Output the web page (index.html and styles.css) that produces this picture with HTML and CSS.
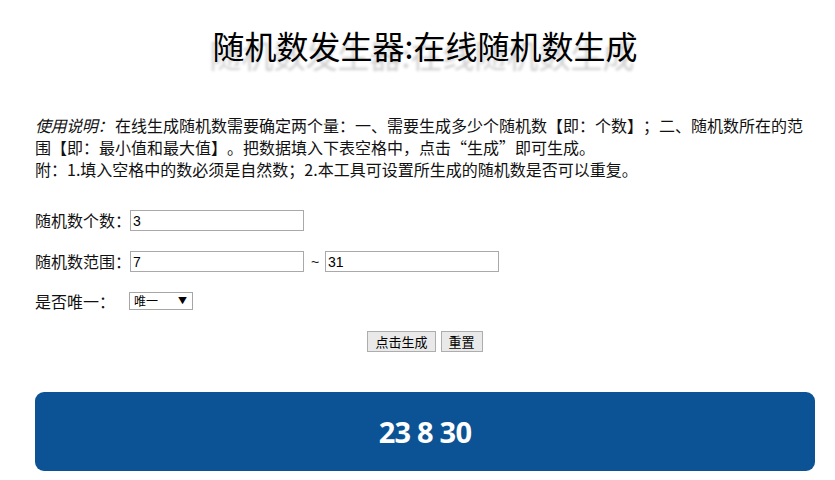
FILE: index.html
```html
<!DOCTYPE html>
<html lang="zh-CN">
<head>
<meta charset="utf-8">
<title>随机数发生器</title>
<link rel="stylesheet" href="styles.css">
</head>
<body>
<div class="page">
  <h1 class="title">随机数发生器:在线随机数生成</h1>
  <p class="intro"><em class="note">使用说明：</em>在线生成随机数需要确定两个量：一、需要生成多少个随机数【即：个数】；二、随机数所在的范围【即：最小值和最大值】。把数据填入下表空格中，点击“生成”即可生成。<br>附：1.填入空格中的数必须是自然数；2.本工具可设置所生成的随机数是否可以重复。</p>
  <div class="form">
    <div class="row row-input">
      <label class="label">随机数个数：</label><input class="field" type="text" value="3">
    </div>
    <div class="row row-input">
      <label class="label">随机数范围：</label><input class="field" type="text" value="7"><span class="tilde">~</span><input class="field" type="text" value="31">
    </div>
    <div class="row row-select">
      <label class="label label-short">是否唯一：</label>
      <span class="select-wrap"><select class="select"><option>唯一</option><option>不唯一</option></select><span class="arrow">▼</span></span>
    </div>
    <div class="buttons">
      <button class="btn" type="button">点击生成</button>
      <button class="btn" type="button">重置</button>
    </div>
  </div>
  <div class="result">23 8 30</div>
</div>
</body>
</html>
```

FILE: styles.css
```css
html, body {
  margin: 0;
  padding: 0;
  background: #fff;
}
body {
  font-family: "Noto Sans CJK SC", "Noto Sans", sans-serif;
  color: #111;
  text-spacing-trim: space-all;
}
.page {
  width: 780px;
  margin-left: 35px;
  padding-top: 20px;
}
.title {
  margin: 0;
  height: 50px;
  line-height: 50px;
  font-size: 32px;
  font-weight: normal;
  text-align: center;
  color: #000;
  text-shadow: -3px 9px 3px #cfcfcf;
}
.intro {
  margin: 44px 0 0;
  font-size: 16px;
  line-height: 22px;
  color: #111;
  text-spacing-trim: space-all;
}
.note {
  font-style: italic;
  letter-spacing: -0.4px;
  margin-right: 2px;
}
.form {
  margin-top: 30px;
  display: flex;
  flex-direction: column;
}
.row {
  display: flex;
  align-items: center;
  font-size: 16px;
}
.row-input {
  height: 21px;
  margin-bottom: 20px;
}
.row-select {
  height: 18px;
}
.label {
  line-height: 21px;
}
.label-short {
  width: 94px;
}
.field {
  box-sizing: border-box;
  width: 174px;
  height: 21px;
  margin: 0 0 0 -1px;
  padding: 0 2px;
  border: 1px solid #a9a9a9;
  font-family: "Liberation Sans", Arial, sans-serif;
  font-size: 14px;
  color: #000;
  background: #fff;
  outline: none;
}
.tilde {
  width: 22px;
  text-align: center;
  font-family: "Liberation Sans", Arial, sans-serif;
  font-size: 14px;
}
.select-wrap {
  position: relative;
  display: flex;
  width: 64px;
  height: 18px;
}
.select {
  appearance: none;
  -webkit-appearance: none;
  display: block;
  box-sizing: border-box;
  width: 64px;
  height: 18px;
  margin: 0;
  padding: 0 0 0 4px;
  border: 1px solid #a6a6a6;
  border-radius: 0;
  background: #fff;
  font-family: "Noto Sans CJK SC", sans-serif;
  font-size: 12px;
  line-height: 16px;
  color: #000;
}
.arrow {
  position: absolute;
  right: 6px;
  top: 4px;
  font-size: 9px;
  line-height: 10px;
  color: #000;
  pointer-events: none;
}
.buttons {
  display: flex;
  justify-content: center;
  gap: 5px;
  margin-top: 21px;
}
.btn {
  box-sizing: border-box;
  height: 21px;
  padding: 0 7px;
  border: 1px solid #adadad;
  border-radius: 0;
  background: #e9e9e9;
  font-family: "Noto Sans CJK SC", sans-serif;
  font-size: 13px;
  line-height: 19px;
  color: #000;
}
.result {
  margin-top: 40px;
  height: 79px;
  border-radius: 9px;
  background: #0b5394;
  color: #fff;
  display: flex;
  align-items: center;
  justify-content: center;
  font-family: "Open Sans", "Noto Sans", sans-serif;
  font-weight: bold;
  font-size: 29px;
  letter-spacing: -0.8px;
}
```
